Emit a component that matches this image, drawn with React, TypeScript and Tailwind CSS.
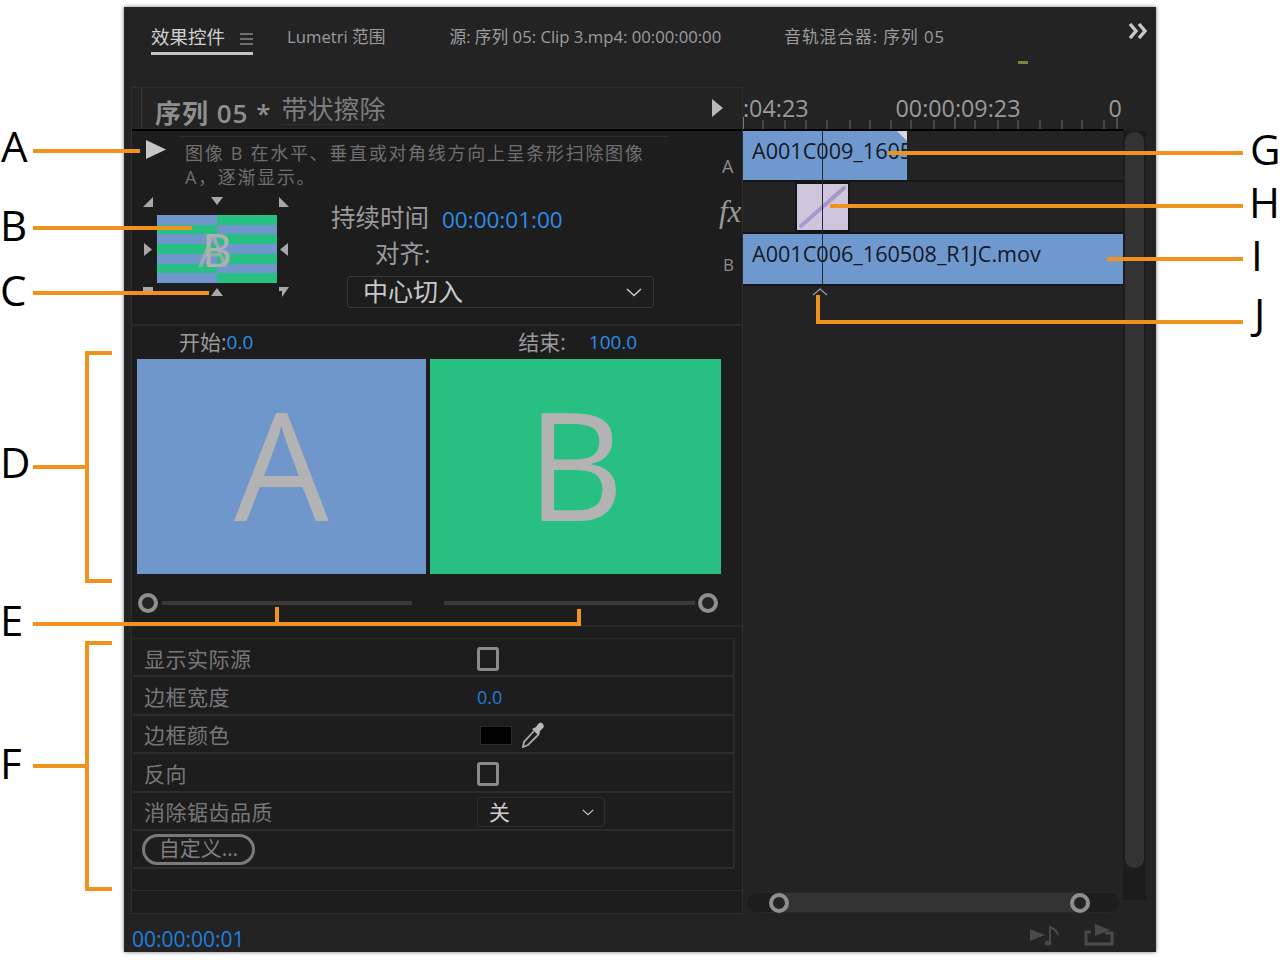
const font = "font-['Open_Sans','Noto_Sans_CJK_SC',sans-serif]";

function Arrow({ dir, className = "" }: { dir: string; className?: string }) {
  const paths: Record<string, string> = {
    down: "M0 1 H12 L6 9 Z",
    up: "M6 1 L12 9 H0 Z",
    left: "M9 0 V13 L1 6.5 Z",
    right: "M1 0 V13 L9 6.5 Z",
    tl: "M10 0 V10 H0 Z",
    tr: "M0 0 L10 10 H0 Z",
    bl: "M0 0 H10 V8 H4 L0 4 Z",
    br: "M0 0 H10 L3 10 V4 H0 Z",
  };
  return (
    <svg width="13" height="13" viewBox="0 0 13 13" className={className}>
      <path d={paths[dir]} fill="#a8a8a8" />
    </svg>
  );
}

function Knob() {
  return <div className="relative w-[20px] h-[20px] rounded-full border-[4px] border-[#8f8f8f] bg-[#232323] shrink-0" />;
}

function Chevron({ className = "" }: { className?: string }) {
  return (
    <svg width="16" height="9" viewBox="0 0 16 9" className={className}>
      <path d="M1 1 L8 7.5 L15 1" fill="none" stroke="#c8c8c8" strokeWidth="1.6" />
    </svg>
  );
}

function Tabs() {
  return (
    <div className="h-[80px] shrink-0 relative flex items-start pl-[27px] pt-[18px] text-[16.7px] text-[#9c9c9c]">
      <div className="w-[102px] h-[30px] border-b-[3px] border-[#c4c4c4] flex items-start justify-between text-[#d0d0d0] text-[18.5px] leading-[24px]">
        <span>效果控件</span>
        <svg width="13" height="12" viewBox="0 0 13 12" className="mt-[8px]">
          <path d="M0 1 H13 M0 6 H13 M0 11 H13" stroke="#b8b8b8" strokeWidth="1.2" />
        </svg>
      </div>
      <span className="ml-[34px] leading-[24px]">Lumetri 范围</span>
      <span className="ml-[64px] leading-[24px]">源: 序列 05: Clip 3.mp4: 00:00:00:00</span>
      <span className="ml-[63px] leading-[24px] tracking-[1px]">音轨混合器: 序列 05</span>
      <div className="absolute left-[894px] top-[54px] w-[10px] h-[3px] bg-[#76863c]" />
      <svg width="20" height="16" viewBox="0 0 20 16" className="absolute left-[1004px] top-[16px]">
        <path d="M2 1 L8 8 L2 15 M11 1 L17 8 L11 15" fill="none" stroke="#c8c8c8" strokeWidth="3.4" />
      </svg>
    </div>
  );
}

function Stripes() {
  const rows = [0, 1, 2, 3, 4, 5, 6];
  return (
    <div className="relative w-[120px] h-[68px] flex flex-col overflow-hidden">
      {rows.map((r) => (
        <div key={r} className="flex-1 flex">
          <div className={r % 2 === 0 ? "w-[60px] bg-[#7097cc]" : "w-[60px] bg-[#27c082]"} />
          <div className={r % 2 === 0 ? "flex-1 bg-[#27c082]" : "flex-1 bg-[#7097cc]"} />
        </div>
      ))}
      <span className="absolute left-[45px] top-[5px] text-[46px] leading-[58px] text-[#b0b0b0]">B</span>
      <span className="absolute left-[41px] top-[5px] text-[46px] leading-[58px] text-[#b0b0b0]/70">A</span>
    </div>
  );
}

function Preview() {
  return (
    <div className="grid grid-cols-[16px_120px_16px] grid-rows-[18px_68px_18px] place-items-center">
      <Arrow dir="tl" className="mt-[-6px]" />
      <Arrow dir="down" className="mt-[-8px]" />
      <Arrow dir="tr" className="mt-[-6px]" />
      <Arrow dir="right" />
      <Stripes />
      <Arrow dir="left" />
      <Arrow dir="bl" className="mt-[2px]" />
      <Arrow dir="up" className="mt-[2px]" />
      <Arrow dir="br" className="mt-[2px]" />
    </div>
  );
}

function Thumb({ letter, color, w }: { letter: string; color: string; w: string }) {
  return (
    <div className={`${w} h-[215px] ${color} flex items-center justify-center pb-[8px] text-[150px] font-medium leading-[200px] text-[#b3b3b3]`}>
      {letter}
    </div>
  );
}

function Checkbox() {
  return <div className="w-[22px] h-[24px] rounded-[3px] border-[3px] border-[#8a8a8a]" />;
}

const rows = [
  { label: "显示实际源", value: <Checkbox /> },
  { label: "边框宽度", value: <span className="text-[18px] text-[#1f7fd6] mt-[2px]">0.0</span> },
  {
    label: "边框颜色",
    value: (
      <div className="flex items-center gap-[9px] pl-[3px]">
        <div className="w-[32px] h-[19px] bg-black border border-[#2c2c2c]" />
        <svg width="24" height="26" viewBox="0 0 24 26">
          <path d="M13 9 L3 20 L2 25 L7 23 L17 13" fill="none" stroke="#a8a8a8" strokeWidth="1.8" />
          <path d="M11 7 L15 5 L17 2 Q20 -1 22 2 Q24 5 21 7 L19 9 L18 14 Z" fill="#b8b8b8" />
        </svg>
      </div>
    ),
  },
  { label: "反向", value: <Checkbox /> },
  {
    label: "消除锯齿品质",
    value: (
      <div className="w-[128px] h-[30px] border border-[#2e2e2e] rounded-[3px] flex items-center justify-between pl-[11px] pr-[8px] text-[21px] text-[#d0d0d0]">
        <span>关</span>
        <Chevron className="scale-75" />
      </div>
    ),
  },
];

function EffectPanel() {
  return (
    <div className="w-[612px] h-[827px] shrink-0 border border-[#2e2e2e] bg-[#1d1d1d] flex flex-col">
      {/* header */}
      <div className="h-[43px] shrink-0 flex items-center pl-[9px] pr-[19px] bg-[#232323] border-b-2 border-black">
        <div className="w-px h-[41px] bg-[#363636]" />
        <span className="ml-[13px] mt-[8px] text-[26px] tracking-[1px] font-semibold text-[#8e8e8e] leading-[30px]">序列 05 *</span>
        <span className="ml-[10px] mt-[1px] text-[26px] text-[#7c7c7c] leading-[30px] border-b border-[#2e2e2e]">带状擦除</span>
        <svg width="11" height="18" viewBox="0 0 11 18" className="ml-auto mb-[2px]">
          <path d="M0 0 L11 9 L0 18 Z" fill="#b8b8b8" />
        </svg>
      </div>

      {/* description and preview */}
      <div className="h-[195px] shrink-0 relative border-b-2 border-[#2a2a2a] flex flex-col">
        <div className="flex pl-[14px] pt-[5px]">
          <svg width="20" height="19" viewBox="0 0 20 19" className="shrink-0 mt-[4px]">
            <path d="M0 0 L20 9.5 L0 19 Z" fill="#c6c6c6" />
          </svg>
          <div className="ml-[12px] w-[491px] border-t border-[#2c2c2c] pl-[7px] pt-[4px] text-[18px] tracking-[1.7px] leading-[24px] text-[#6f6f6f]">
            <div>图像 B 在水平、垂直或对角线方向上呈条形扫除图像</div>
            <div>A，逐渐显示。</div>
          </div>
        </div>
        <div className="flex mt-[8px] pl-[9px]">
          <Preview />
          <div className="ml-[38px] flex flex-col">
            <div className="flex items-center h-[36px] mt-[3px]">
              <span className="text-[24.5px] text-[#9a9a9a]">持续时间</span>
              <span className="ml-[13px] text-[22.5px] text-[#2d8ceb] mt-[4px]">00:00:01:00</span>
            </div>
            <span className="ml-[44px] mt-[1px] text-[24.5px] leading-[34px] text-[#9a9a9a]">对齐:</span>
            <div className="ml-[16px] mt-[5px] w-[307px] h-[32px] border border-[#383838] rounded-[3px] flex items-center justify-between pl-[15px] pr-[11px] text-[25px] text-[#c8c8c8]">
              <span>中心切入</span>
              <Chevron />
            </div>
          </div>
        </div>
        <span className="absolute left-[590px] top-[23px] text-[18px] leading-[24px] text-[#8c8c8c]">A</span>
        <span className="absolute left-[587px] top-[63px] text-[31px] leading-[36px] italic text-[#9a9a9a] font-['Liberation_Serif',serif]">fx</span>
        <span className="absolute left-[591px] top-[122px] text-[17px] leading-[24px] text-[#8c8c8c]">B</span>
      </div>

      {/* start and end */}
      <div className="h-[33px] shrink-0 flex items-center text-[21px] text-[#9a9a9a]">
        <span className="ml-[47px]">开始:</span>
        <span className="text-[#2d8ceb] text-[19px]">0.0</span>
        <span className="ml-[265px]">结束:</span>
        <span className="ml-[23px] text-[#2d8ceb] text-[19px]">100.0</span>
      </div>

      <div className="flex gap-[4px] pl-[5px]">
        <Thumb letter="A" color="bg-[#7097cc]" w="w-[289px]" />
        <Thumb letter="B" color="bg-[#27c082]" w="w-[291px]" />
      </div>

      {/* sliders */}
      <div className="h-[53px] shrink-0 flex items-center pl-[6px] pt-[6px] border-b-2 border-[#262626]">
        <Knob />
        <div className="ml-[4px] w-[250px] h-[4px] bg-[#3a3a3a]" />
        <div className="ml-[32px] w-[251px] h-[4px] bg-[#3a3a3a]" />
        <div className="ml-[3px]"><Knob /></div>
      </div>

      {/* properties */}
      <div className="mt-[11px] ml-[1px] w-[602px] border-t border-[#2a2a2a] border-r-2 border-r-[#2a2a2a] text-[#777]">
        {rows.map((row, i) => (
          <div key={row.label} className={`${i === 0 ? "h-[38px]" : "h-[38.5px]"} border-b-2 border-[#2c2c2c] flex items-center`}>
            <span className="w-[344px] pl-[11px] pt-[3px] text-[21px] tracking-[0.5px] leading-[28px]">{row.label}</span>
            <div className="mt-[3px] flex items-center">{row.value}</div>
          </div>
        ))}
        <div className="h-[38px] border-b-2 border-[#2c2c2c] flex items-center pl-[9px]">
          <div className="w-[113px] h-[31px] rounded-full border-[3px] border-[#7a7a7a] flex items-center justify-center text-[21px] text-[#7f7f7f]">
            自定义…
          </div>
        </div>
      </div>
      <div className="mt-[21px] h-px bg-[#2e2e2e]" />
    </div>
  );
}

function Timeline() {
  const ticks = [763, 785, 806, 827, 850, 870, 891, 911, 934, 975, 998, 1018, 1040, 1062, 1082, 1104];
  return (
    <div className="w-[403px] h-[827px] shrink-0 flex flex-col relative">
      {/* ruler */}
      <div className="h-[44px] shrink-0 w-[380px] relative">
        <div className="flex pt-[4px] text-[23.3px] leading-[34px] text-[#9a9a9a]">
          <span>:04:23</span>
          <span className="ml-[87px]">00:00:09:23</span>
          <span className="ml-[88px]">0</span>
        </div>
        <svg width="380" height="44" viewBox="743 87 380 44" className="absolute left-0 top-0">
          {ticks.map((t) => (
            <path key={t} d={`M${t} 120 V129`} stroke="#6a6a6a" strokeWidth="1" />
          ))}
          <path d="M743.5 117 V129 M955 117 V129 M1117 117 V129" stroke="#7a7a7a" strokeWidth="1" />
        </svg>
        <div className="absolute left-0 right-0 bottom-0 h-[2px] bg-black" />
      </div>

      <div className="flex-1 flex min-h-0">
        <div className="w-[380px] flex flex-col">
          <div className="h-[51px] border-b-2 border-[#161616] flex">
            <div className="w-[164px] h-[49px] bg-[#6f98cf] overflow-hidden whitespace-nowrap pl-[9px] text-[21.6px] leading-[40px] text-[#14181f] relative">
              A001C009_160508
              <svg width="10" height="10" viewBox="0 0 10 10" className="absolute right-0 top-0">
                <path d="M0 0 H10 V10 Z" fill="#d8d8d8" />
              </svg>
            </div>
          </div>
          <div className="h-[52px] border-b-2 border-[#161616] pl-[52px] flex items-start">
            <div className="w-[55px] h-[50px] bg-[#cfc6de] border-2 border-[#141414]">
              <svg width="51" height="46" viewBox="0 0 51 46">
                <path d="M4 42 L47 4" stroke="#a897c8" strokeWidth="4" strokeLinecap="round" />
              </svg>
            </div>
          </div>
          <div className="h-[52px] border-b-2 border-[#161616]">
            <div className="h-[50px] bg-[#6f98cf] whitespace-nowrap pl-[9px] text-[21.6px] leading-[40px] text-[#14181f]">
              A001C006_160508_R1JC.mov
            </div>
          </div>
          <svg width="16" height="8" viewBox="0 0 16 8" className="ml-[69px] mt-[2px]">
            <path d="M1 7 L8 1 L15 7" fill="none" stroke="#a0a0a0" strokeWidth="1.2" />
          </svg>
        </div>
        <div className="w-[23px] h-[769px] bg-[#1c1c1c] pl-[2px] pr-[2px] pt-[1px]">
          <div className="h-[736px] bg-[#333333] rounded-t-[9px] rounded-b-[9px]" />
        </div>
      </div>

      {/* horizontal zoom bar */}
      <div className="absolute left-[3px] top-[805px] w-[375px] h-[21px] rounded-full bg-[#1d1d1d] border border-[#282828] flex items-center pl-[22px]">
        <Knob />
        <div className="w-[301px] h-[19px] mx-[-10px] bg-[#333333]" />
        <Knob />
      </div>

      {/* playhead */}
      <div className="absolute left-[79px] top-[44px] w-[1px] h-[153px] bg-[#1b2a3c]" />
    </div>
  );
}

function Footer() {
  return (
    <div className="flex-1 relative flex items-center pl-[8px]">
      <span className="text-[21px] text-[#1f7fe0] mt-[10px]">00:00:00:01</span>
      <svg width="84" height="22" viewBox="0 0 84 22" className="absolute left-[906px] top-[10px]">
        <path d="M0 5 L15 11 L0 17 Z" fill="#4a4a4a" />
        <path d="M20 19 V3 Q26 5 28 11" fill="none" stroke="#4a4a4a" strokeWidth="2" />
        <ellipse cx="18" cy="19" rx="3.5" ry="2.5" fill="#4a4a4a" />
        <path d="M61 8 H56 V20 H82 V9 H75" fill="none" stroke="#4a4a4a" strokeWidth="3" />
        <path d="M65 0 L80 6 L65 12 Z" fill="#4a4a4a" />
      </svg>
    </div>
  );
}

function Line({ className }: { className: string }) {
  return <div className={`absolute bg-[#f0931e] ${className}`} />;
}

function Letter({ className, children }: { className: string; children: string }) {
  return (
    <span className={`absolute text-[42px] leading-[48px] text-black ${className}`}>{children}</span>
  );
}

export default function App() {
  return (
    <div className={`relative w-[1280px] h-[960px] bg-white overflow-hidden pl-[124px] pt-[7px] ${font}`}>
      <div className="w-[1032px] h-[945px] bg-[#232323] flex flex-col shadow-[0_0_4px_rgba(0,0,0,0.55)]">
        <Tabs />
        <div className="flex pl-[7px] shrink-0">
          <EffectPanel />
          <Timeline />
        </div>
        <Footer />
      </div>

      {/* callouts */}
      <Line className="left-[33px] top-[149px] w-[107px] h-[4px]" />
      <Line className="left-[33px] top-[226px] w-[159px] h-[4px]" />
      <Line className="left-[33px] top-[291px] w-[176px] h-[4px]" />
      <Line className="left-[33px] top-[465px] w-[52px] h-[4px]" />
      <Line className="left-[85px] top-[351px] w-[4px] h-[232px]" />
      <Line className="left-[85px] top-[351px] w-[27px] h-[4px]" />
      <Line className="left-[85px] top-[579px] w-[27px] h-[4px]" />
      <Line className="left-[33px] top-[622px] w-[548px] h-[4px]" />
      <Line className="left-[275px] top-[607px] w-[4px] h-[16px]" />
      <Line className="left-[577px] top-[609px] w-[4px] h-[14px]" />
      <Line className="left-[33px] top-[764px] w-[52px] h-[4px]" />
      <Line className="left-[85px] top-[641px] w-[4px] h-[250px]" />
      <Line className="left-[85px] top-[641px] w-[27px] h-[4px]" />
      <Line className="left-[85px] top-[887px] w-[27px] h-[4px]" />
      <Line className="left-[888px] top-[151px] w-[355px] h-[4px]" />
      <Line className="left-[830px] top-[204px] w-[413px] h-[4px]" />
      <Line className="left-[1107px] top-[257px] w-[136px] h-[4px]" />
      <Line className="left-[816px] top-[320px] w-[427px] h-[4px]" />
      <Line className="left-[816px] top-[295px] w-[4px] h-[26px]" />

      <Letter className="left-[1px] top-[122px]">A</Letter>
      <Letter className="left-[0px] top-[201px]">B</Letter>
      <Letter className="left-[0px] top-[266px]">C</Letter>
      <Letter className="left-[0px] top-[438px]">D</Letter>
      <Letter className="left-[0px] top-[596px]">E</Letter>
      <Letter className="left-[0px] top-[739px]">F</Letter>
      <Letter className="left-[1250px] top-[125px]">G</Letter>
      <Letter className="left-[1249px] top-[178px]">H</Letter>
      <Letter className="left-[1251px] top-[231px]">I</Letter>
      <Letter className="left-[1254px] top-[289px]">J</Letter>
    </div>
  );
}
